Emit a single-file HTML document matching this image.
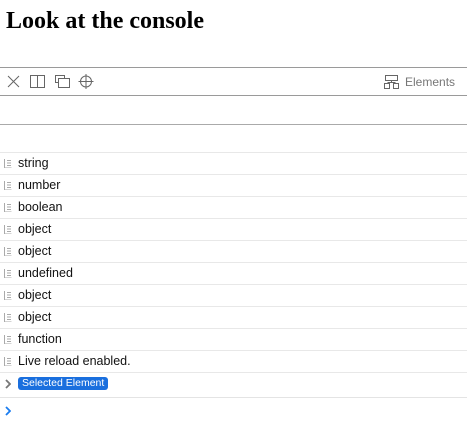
<!DOCTYPE html><html><head><style>
body{margin:0;width:467px;height:425px;background:#fff;font-family:"Liberation Sans",sans-serif;position:relative;overflow:hidden}
h1{position:absolute;left:6px;top:8px;margin:0;font:bold 24px "Liberation Serif",serif;color:#000}
.hl{position:absolute;left:0;width:467px;height:1px;background:#9a9a9a}
.row{position:absolute;left:0;width:467px;height:22px;border-top:1px solid #e8e8e8;font-size:12.5px;color:#111;line-height:21px}
.row span{position:absolute;left:18px}
.ic{position:absolute;left:4px;top:6px;width:8px;height:9px}
</style></head><body>
<h1>Look at the console</h1>
<div class="hl" style="top:67px"></div>
<svg style="position:absolute;left:0;top:68px" width="110" height="27" stroke="#666" fill="none" stroke-width="1">
<path d="M8 8l11 11M19 8L8 19"/>
<rect x="30.5" y="7.5" width="14" height="12"/><path d="M37.5 7.5v12"/>
<path d="M55.5 10.5v-3h9v3"/><path d="M55.5 10.5v4h3"/><rect x="58.5" y="10.5" width="11" height="9"/>
<circle cx="86" cy="13.5" r="5.5"/><path d="M86 6v15M78.5 13.5h15"/>
</svg>
<svg style="position:absolute;left:384px;top:75px" width="16" height="14" stroke="#666" fill="none"><rect x="1.5" y="0.5" width="12" height="5"/><path d="M7.5 5.5v2M3.5 7.5h8"/><rect x="0.5" y="8.5" width="5" height="5"/><rect x="9.5" y="8.5" width="5" height="5"/></svg>
<div style="position:absolute;left:405px;top:75px;font-size:12px;color:#777">Elements</div>
<div class="hl" style="top:95px"></div>
<div class="hl" style="top:124px;background:#aaa"></div>
<div class="row" style="top:152px"><svg class="ic"><path d="M0.5 0v9h7M3 1.5h4M3 4h4M3 6.5h4" stroke="#aaa" fill="none"/></svg><span>string</span></div>
<div class="row" style="top:174px"><svg class="ic"><path d="M0.5 0v9h7M3 1.5h4M3 4h4M3 6.5h4" stroke="#aaa" fill="none"/></svg><span>number</span></div>
<div class="row" style="top:196px"><svg class="ic"><path d="M0.5 0v9h7M3 1.5h4M3 4h4M3 6.5h4" stroke="#aaa" fill="none"/></svg><span>boolean</span></div>
<div class="row" style="top:218px"><svg class="ic"><path d="M0.5 0v9h7M3 1.5h4M3 4h4M3 6.5h4" stroke="#aaa" fill="none"/></svg><span>object</span></div>
<div class="row" style="top:240px"><svg class="ic"><path d="M0.5 0v9h7M3 1.5h4M3 4h4M3 6.5h4" stroke="#aaa" fill="none"/></svg><span>object</span></div>
<div class="row" style="top:262px"><svg class="ic"><path d="M0.5 0v9h7M3 1.5h4M3 4h4M3 6.5h4" stroke="#aaa" fill="none"/></svg><span>undefined</span></div>
<div class="row" style="top:284px"><svg class="ic"><path d="M0.5 0v9h7M3 1.5h4M3 4h4M3 6.5h4" stroke="#aaa" fill="none"/></svg><span>object</span></div>
<div class="row" style="top:306px"><svg class="ic"><path d="M0.5 0v9h7M3 1.5h4M3 4h4M3 6.5h4" stroke="#aaa" fill="none"/></svg><span>object</span></div>
<div class="row" style="top:328px"><svg class="ic"><path d="M0.5 0v9h7M3 1.5h4M3 4h4M3 6.5h4" stroke="#aaa" fill="none"/></svg><span>function</span></div>
<div class="row" style="top:350px"><svg class="ic"><path d="M0.5 0v9h7M3 1.5h4M3 4h4M3 6.5h4" stroke="#aaa" fill="none"/></svg><span>Live reload enabled.</span></div>
<div class="row" style="top:372px;height:20px"><svg style="position:absolute;left:5px;top:6px" width="6" height="10"><path d="M1 1l4 4-4 4" stroke="#777" stroke-width="1.8" fill="none"/></svg>
<span style="left:18px;top:4px;background:#1a6fde;color:#fff;font-size:10.5px;line-height:13px;padding:0 4px;border-radius:3px">Selected Element</span></div>
<div class="hl" style="top:397px;background:#e4e4e4"></div>
<svg style="position:absolute;left:5px;top:406px" width="6" height="10"><path d="M1 1l4 4-4 4" stroke="#1a7cf0" stroke-width="1.8" fill="none"/></svg>
</body></html>
